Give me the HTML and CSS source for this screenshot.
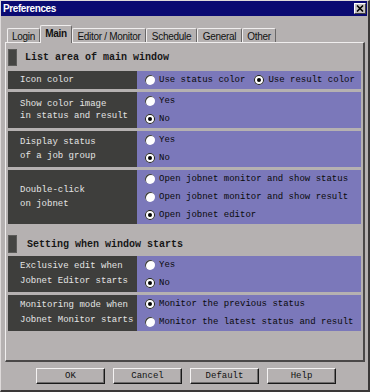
FILE: index.html
```html
<!DOCTYPE html>
<html lang="en">
<head>
    <meta charset="UTF-8">
    <meta name="viewport" content="width=device-width, initial-scale=1.0">
    <title>Preferences</title>
    <link rel="stylesheet" href="styles.css">
</head>
<body>
  <div class="window">
    <div class="title-bar">
      <span class="title">Preferences</span>
      <button class="close-button" aria-label="Close">
        <svg width="8" height="7" viewBox="0 0 8 7"><path d="M1 0.5 L7 6.5 M7 0.5 L1 6.5" stroke="#000" stroke-width="1.6"/></svg>
      </button>
    </div>

    <nav class="tabs">
      <div class="tab tab-login">Login</div>
      <div class="tab tab-main active">Main</div>
      <div class="tab tab-editor">Editor / Monitor</div>
      <div class="tab tab-schedule">Schedule</div>
      <div class="tab tab-general">General</div>
      <div class="tab tab-other">Other</div>
    </nav>

    <div class="panel">
      <div class="section first">
        <span class="section-mark"></span>
        <span class="section-title">List area of main window</span>
      </div>

      <div class="row">
        <div class="label">Icon color</div>
        <div class="options inline">
          <label class="opt"><span class="radio"></span>Use status color</label>
          <label class="opt"><span class="radio on"></span>Use result color</label>
        </div>
      </div>

      <div class="row">
        <div class="label tight">Show color image<br>in status and result</div>
        <div class="options">
          <label class="opt"><span class="radio"></span>Yes</label>
          <label class="opt"><span class="radio on"></span>No</label>
        </div>
      </div>

      <div class="row">
        <div class="label">Display status<br>of a job group</div>
        <div class="options">
          <label class="opt"><span class="radio"></span>Yes</label>
          <label class="opt"><span class="radio on"></span>No</label>
        </div>
      </div>

      <div class="row">
        <div class="label">Double-click<br>on jobnet</div>
        <div class="options">
          <label class="opt"><span class="radio"></span>Open jobnet monitor and show status</label>
          <label class="opt"><span class="radio"></span>Open jobnet monitor and show result</label>
          <label class="opt"><span class="radio on"></span>Open jobnet editor</label>
        </div>
      </div>

      <div class="section second">
        <span class="section-mark"></span>
        <span class="section-title">Setting when window starts</span>
      </div>

      <div class="row">
        <div class="label wide">Exclusive edit when<br>Jobnet Editor starts</div>
        <div class="options">
          <label class="opt"><span class="radio"></span>Yes</label>
          <label class="opt"><span class="radio on"></span>No</label>
        </div>
      </div>

      <div class="row">
        <div class="label wide">Monitoring mode when<br>Jobnet Monitor starts</div>
        <div class="options">
          <label class="opt"><span class="radio on"></span>Monitor the previous status</label>
          <label class="opt"><span class="radio"></span>Monitor the latest status and result</label>
        </div>
      </div>
    </div>

    <div class="buttons">
      <button class="dlg-button">OK</button>
      <button class="dlg-button">Cancel</button>
      <button class="dlg-button">Default</button>
      <button class="dlg-button">Help</button>
    </div>
  </div>
</body>
</html>
```

FILE: styles.css
```css
* {
  box-sizing: border-box;
}

body {
  margin: 0;
  background: #b5b1b1;
}

.window {
  width: 370px;
  height: 392px;
  background: #b5b1b1;
  border-top: 1px solid #dedada;
  border-left: 1px solid #dedada;
  border-right: 2px solid #3a3838;
  border-bottom: 2px solid #3a3838;
  font-family: "Liberation Mono", monospace;
}

.title-bar {
  height: 15px;
  margin: 0 1px 0 0;
  background: #0a0a72;
  display: flex;
  align-items: center;
  justify-content: space-between;
  padding: 0 1px 0 2px;
}

.title {
  font-family: "Liberation Sans", Arial, sans-serif;
  font-weight: bold;
  font-size: 10px;
  letter-spacing: -0.4px;
  color: #fff;
}

.close-button {
  width: 12px;
  height: 11px;
  padding: 0;
  background: #c8c4c4;
  border: 1px solid;
  border-color: #fff #404040 #404040 #fff;
  display: flex;
  align-items: center;
  justify-content: center;
}

.tabs {
  display: flex;
  align-items: flex-end;
  height: 17px;
  margin-top: 9px;
  padding-left: 6px;
}

.tab {
  height: 14px;
  border-top: 1px solid #f0eeee;
  border-left: 1px solid #f0eeee;
  border-right: 1px solid #6a6868;
  border-radius: 2px 2px 0 0;
  font-family: "Liberation Sans", Arial, sans-serif;
  font-size: 10px;
  letter-spacing: -0.3px;
  color: #111;
  display: flex;
  align-items: center;
  justify-content: center;
  padding-top: 1px;
}

.tab.active {
  height: 18px;
  margin-bottom: -1px;
  background: #b5b1b1;
  font-weight: bold;
  position: relative;
  z-index: 1;
  align-items: flex-start;
  padding-top: 2px;
}

.tab-login { width: 33px; }
.tab-main { width: 32px; }
.tab-editor { width: 74px; }
.tab-schedule { width: 51px; }
.tab-general { width: 45px; }
.tab-other { width: 34px; }

.panel {
  margin-left: 4px;
  width: 360px;
  height: 320px;
  border-top: 1px solid #f0eeee;
  border-left: 1px solid #f0eeee;
  border-right: 2px solid #4a4848;
  border-bottom: 2px solid #4a4848;
  padding: 3px 2px 0 2px;
  display: flex;
  flex-direction: column;
  gap: 3px;
}

.section {
  display: flex;
  align-items: center;
  gap: 8px;
  height: 22px;
}

.section.second {
  height: 26px;
  padding-top: 8px;
  gap: 10px;
}

.section-mark {
  width: 9px;
  height: 17px;
  background: #454543;
  border: 1px solid #5c5c5a;
}

.section.second .section-mark {
  height: 18px;
}

.section-title {
  font-weight: bold;
  font-size: 10px;
  color: #161616;
}

.row {
  display: flex;
}

.label {
  width: 129px;
  background: #3e3e3c;
  color: #e4e4e4;
  font-size: 9px;
  line-height: 14px;
  padding-left: 12px;
  display: flex;
  align-items: center;
}

.label.tight {
  line-height: 12px;
}

.label.wide {
  line-height: 15px;
}

.options {
  flex: 1;
  background: #7b78ba;
  padding-left: 8px;
  display: flex;
  flex-direction: column;
}

.options.inline {
  flex-direction: row;
  gap: 9px;
}

.opt {
  height: 18px;
  display: flex;
  align-items: center;
  font-size: 9px;
  color: #0a0a0a;
  white-space: nowrap;
}

.radio {
  width: 10px;
  height: 10px;
  margin-right: 4px;
  border-radius: 50%;
  background: #fff;
  box-shadow: inset 1px 1px 0 #3a3a3a;
  display: flex;
  align-items: center;
  justify-content: center;
}

.radio.on {
  box-shadow: inset 0 0 0 1px #1a1a1a;
}

.radio.on::after {
  content: "";
  width: 4px;
  height: 4px;
  border-radius: 50%;
  background: #000;
}

.buttons {
  display: flex;
  gap: 8px;
  padding-left: 35px;
  margin-top: 6px;
}

.dlg-button {
  width: 69px;
  height: 16px;
  padding: 0;
  background: #b5b1b1;
  border: 1px solid;
  border-color: #f4f2f2 #1a1a1a #1a1a1a #f4f2f2;
  box-shadow: inset -1px -1px 0 #6e6c6c;
  font-family: "Liberation Mono", monospace;
  font-size: 9px;
  color: #111;
}
```
